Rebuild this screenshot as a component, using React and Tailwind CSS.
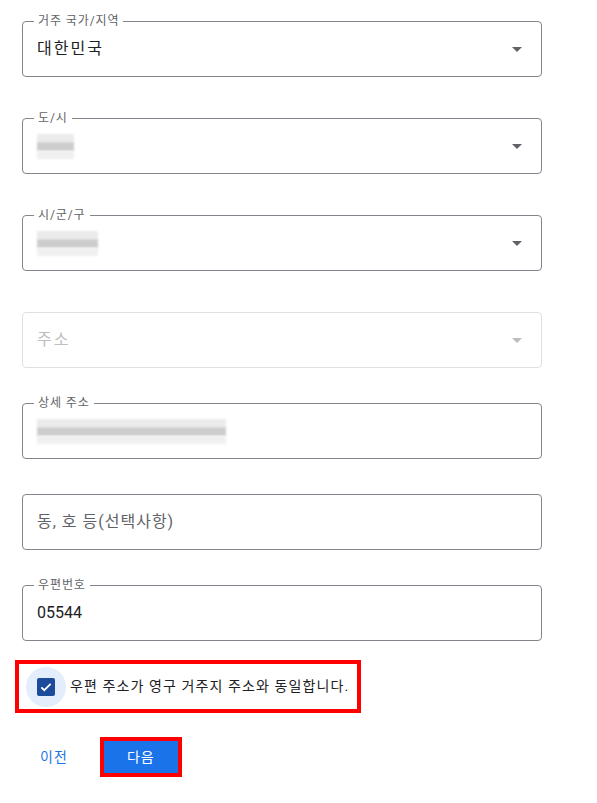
import React from "react";

const font = "font-['Roboto','Noto_Sans_CJK_KR',sans-serif]";

const Arrow = ({ disabled }) => (
  <svg
    width="24"
    height="24"
    viewBox="0 0 24 24"
    className={disabled ? "fill-[#bdbdbd]" : "fill-[#5f6368]"}
  >
    <path d="M7 10l5 5 5-5z" />
  </svg>
);

// blurred (redacted) value
const Redacted = ({ w }) => (
  <div className="flex flex-col gap-0" style={{ width: w }}>
    <div className="h-[8px] bg-[#ebebeb] blur-[1px]" />
    <div className="h-[9px] bg-[#cdcdcd] blur-[1px]" />
    <div className="h-[8px] bg-[#f0f0f0] blur-[1px]" />
  </div>
);

const Field = ({ label, children, select, disabled }) => (
  <div
    className={`relative h-[56px] w-[520px] rounded-[4px] border flex items-center pl-[14px] pr-[12px] ${
      disabled ? "border-[#e0e0e0]" : "border-[#80868b]"
    }`}
  >
    {label && (
      <span className="absolute -top-[9px] left-[11px] bg-white px-[4px] text-[12px] leading-[16px] tracking-[0.9px] text-[#5f6368]">
        {label}
      </span>
    )}
    <div className="flex-1 flex items-center">{children}</div>
    {select && <Arrow disabled={disabled} />}
  </div>
);

export default function App() {
  return (
    <div className={`${font} w-[597px] h-[803px] bg-white pl-[22px] pt-[21px]`}>
      <div className="flex flex-col">
        <Field label="거주 국가/지역" select>
          <span className="text-[16px] tracking-[2px] text-[#202124]">대한민국</span>
        </Field>
        <div className="h-[41px]" />
        <Field label="도/시" select>
          <Redacted w={37} />
        </Field>
        <div className="h-[41px]" />
        <Field label="시/군/구" select>
          <Redacted w={61} />
        </Field>
        <div className="h-[41px]" />
        <Field select disabled>
          <span className="text-[16px] tracking-[2px] text-[#bdbdbd]">주소</span>
        </Field>
        <div className="h-[35px]" />
        <Field label="상세 주소">
          <Redacted w={189} />
        </Field>
        <div className="h-[35px]" />
        <Field>
          <span className="text-[16px] tracking-[1px] text-[#5f6368]">동, 호 등(선택사항)</span>
        </Field>
        <div className="h-[35px]" />
        <Field label="우편번호">
          <span className="text-[16px] text-[#202124]">05544</span>
        </Field>
      </div>

      <div className="mt-[19px] -ml-[7px] w-[346px] h-[53px] border-4 border-[#ff0000] flex items-center pl-[7px]">
        <div className="w-[40px] h-[40px] rounded-full bg-[#e3edfb] flex items-center justify-center">
          <div className="w-[18px] h-[18px] rounded-[2px] bg-[#1c4b9c] flex items-center justify-center">
            <svg width="14" height="14" viewBox="0 0 24 24" fill="none" stroke="white" strokeWidth="3">
              <path d="M4 12.5l5 5L20 6.5" />
            </svg>
          </div>
        </div>
        <span className="ml-[4px] text-[14px] tracking-[1.1px] text-[#202124]">
          우편 주소가 영구 거주지 주소와 동일합니다.
        </span>
      </div>

      <div className="mt-[24px] flex items-center">
        <span className="ml-[18px] text-[14px] tracking-[1px] text-[#1a73e8]">이전</span>
        <div className="ml-[32px] border-4 border-[#ff0000] w-[82px] h-[40px] flex items-center justify-center">
          <div className="w-[74px] h-[32px] bg-[#1a73e8] flex items-center justify-center text-[14px] tracking-[1px] text-white">
            다음
          </div>
        </div>
      </div>
    </div>
  );
}
